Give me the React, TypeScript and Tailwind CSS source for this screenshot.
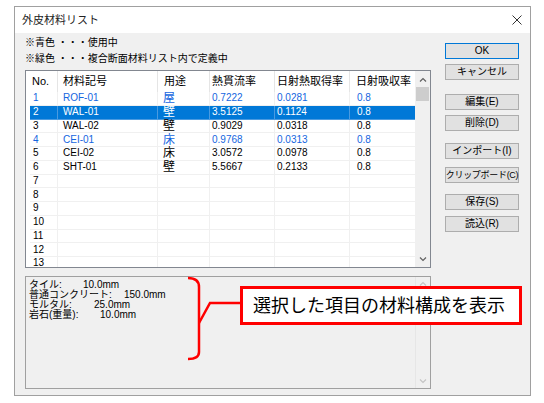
import React from 'react';

type Row = {
  no: number;
  code?: string;
  use?: string;
  u?: string;
  shgc?: string;
  abs?: string;
  color?: 'blue' | 'black';
};

const rows: Row[] = [
  { no: 1, code: 'ROF-01', use: '屋', u: '0.7222', shgc: '0.0281', abs: '0.8', color: 'blue' },
  { no: 2, code: 'WAL-01', use: '壁', u: '3.5125', shgc: '0.1124', abs: '0.8' },
  { no: 3, code: 'WAL-02', use: '壁', u: '0.9029', shgc: '0.0318', abs: '0.8' },
  { no: 4, code: 'CEI-01', use: '床', u: '0.9768', shgc: '0.0313', abs: '0.8', color: 'blue' },
  { no: 5, code: 'CEI-02', use: '床', u: '3.0572', shgc: '0.0978', abs: '0.8' },
  { no: 6, code: 'SHT-01', use: '壁', u: '5.5667', shgc: '0.2133', abs: '0.8' },
  { no: 7 },
  { no: 8 },
  { no: 9 },
  { no: 10 },
  { no: 11 },
  { no: 12 },
  { no: 13 },
];

const SELECTED = 2;

function Chevron({ up, faint }: { up?: boolean; faint?: boolean }) {
  return (
    <svg width="8" height="5" viewBox="0 0 8 5" className="block">
      <path
        d={up ? 'M1 4.5 L4 1.5 L7 4.5' : 'M1 0.5 L4 3.5 L7 0.5'}
        fill="none"
        stroke={faint ? '#c4c4c4' : '#606060'}
        strokeWidth="1.2"
      />
    </svg>
  );
}

function Btn({ label, def, className = '' }: { label: string; def?: boolean; className?: string }) {
  return (
    <div
      className={`h-[16px] w-[74px] flex items-center justify-center bg-[#e1e1e1] leading-none whitespace-nowrap text-black border ${
        def ? 'border-[#0078d7]' : 'border-[#adadad]'
      } ${className}`}
    >
      {label}
    </div>
  );
}

export default function App() {
  return (
    <div className="relative w-[544px] h-[403px] bg-white overflow-hidden pt-[6px] pl-[14px] font-['Liberation_Sans','Noto_Sans_CJK_JP',sans-serif] text-black">
      {/* Dialog */}
      <div className="w-[517px] h-[390px] border border-[#a0a0a0] bg-[#f0f0f0] flex flex-col">
        {/* Title bar */}
        <div className="h-[26px] bg-white flex items-center justify-between pl-[7px] pr-[8px] shrink-0">
          <span className="text-[11px] text-[#222]">外皮材料リスト</span>
          <svg width="10" height="10" viewBox="0 0 10 10">
            <path d="M0.5 0.5 L9.5 9.5 M9.5 0.5 L0.5 9.5" stroke="#333" strokeWidth="1" />
          </svg>
        </div>

        {/* Body */}
        <div className="flex pl-[10px]">
          {/* Left column */}
          <div className="w-[406px] pt-[2px]">
            <div className="text-[10px] leading-[16px]">※青色 ・・・使用中</div>
            <div className="text-[10px] leading-[16px]">※緑色 ・・・複合断面材料リスト内で定義中</div>

            {/* List */}
            <div className="mt-[3px] h-[198px] border border-[#828790] bg-white flex overflow-hidden">
              <div className="w-[389px] pl-[4px] flex flex-col">
                {/* Header */}
                <div className="h-[21px] flex items-center text-[11px] shrink-0">
                  <div className="w-[28px] h-full flex items-center pl-[2px] border-r border-[#e5e5e5]">No.</div>
                  <div className="w-[100px] h-full flex items-center pl-[5px] border-r border-[#e5e5e5]">材料記号</div>
                  <div className="w-[52px] h-full flex items-center pl-[6px] border-r border-[#e5e5e5]">用途</div>
                  <div className="w-[65px] h-full flex items-center pl-[2px] border-r border-[#e5e5e5]">熱貫流率</div>
                  <div className="w-[75px] h-full flex items-center pl-[2px] border-r border-[#e5e5e5]">日射熱取得率</div>
                  <div className="w-[65px] h-full flex items-center pl-[6px]">日射吸収率</div>
                </div>
                {/* Rows */}
                {rows.map((r) => {
                  const sel = r.no === SELECTED;
                  const color = sel ? 'text-white' : r.color === 'blue' ? 'text-[#1466e0]' : 'text-black';
                  const line = sel ? 'border-[#4a9ae0]' : 'border-[#f0f0f0]';
                  return (
                    <div
                      key={r.no}
                      className={`h-[13.75px] shrink-0 flex items-center leading-none border-b ${line} ${sel ? 'bg-[#0078d7]' : ''} ${color}`}
                    >
                      <div className={`w-[28px] h-full flex items-center pl-[3px] text-[10px] border-r ${line}`}>{r.no}</div>
                      <div className={`w-[100px] h-full flex items-center pl-[5px] text-[10px] border-r ${line}`}>{r.code}</div>
                      <div className={`w-[52px] h-full flex items-center pl-[5px] text-[12px] border-r ${line}`}>{r.use}</div>
                      <div className={`w-[65px] h-full flex items-center pl-[2px] text-[10px] border-r ${line}`}>{r.u}</div>
                      <div className={`w-[75px] h-full flex items-center pl-[2px] text-[10px] border-r ${line}`}>{r.shgc}</div>
                      <div className="w-[65px] h-full flex items-center pl-[7px] text-[10px]">{r.abs}</div>
                    </div>
                  );
                })}
              </div>
              {/* Scrollbar */}
              <div className="w-[15px] bg-[#f0f0f0] flex flex-col items-center">
                <div className="h-[15px] flex items-center justify-center mt-[1px]">
                  <Chevron up />
                </div>
                <div className="w-[13px] h-[14px] bg-[#cdcdcd]" />
                <div className="flex-1" />
                <div className="h-[15px] flex items-center justify-center">
                  <Chevron />
                </div>
              </div>
            </div>

            {/* Composition panel */}
            <div className="mt-[8px] h-[113px] border border-[#a0a0a0] bg-[#f0f0f0] flex">
              <div className="flex-1 pl-[3px] pt-[3px] text-[10px] leading-[10px] text-black">
                <div className="flex">
                  <span className="w-[54px]">タイル:</span>
                  <span>10.0mm</span>
                </div>
                <div className="flex">
                  <span className="w-[95px]">普通コンクリート:</span>
                  <span>150.0mm</span>
                </div>
                <div className="flex">
                  <span className="w-[65px]">モルタル:</span>
                  <span>25.0mm</span>
                </div>
                <div className="flex">
                  <span className="w-[71px]">岩石(重量):</span>
                  <span>10.0mm</span>
                </div>
              </div>
              <div className="w-[15px] border-l border-[#e6e6e6] flex flex-col items-center justify-between py-[4px]">
                <Chevron up faint />
                <Chevron faint />
              </div>
            </div>
          </div>

          {/* Buttons */}
          <div className="ml-[14px] pt-[10px] flex flex-col">
            <Btn label="OK" def className="text-[10px]" />
            <Btn label="キャンセル" className="mt-[5px] text-[10px]" />
            <Btn label="編集(E)" className="mt-[14px] text-[10px]" />
            <Btn label="削除(D)" className="mt-[5px] text-[10px]" />
            <Btn label="インポート(I)" className="mt-[12px] text-[10px]" />
            <Btn label="クリップボード(C)" className="mt-[8px] text-[9px] tracking-[-0.3px]" />
            <Btn label="保存(S)" className="mt-[11px] text-[10px]" />
            <Btn label="読込(R)" className="mt-[6px] text-[10px]" />
          </div>
        </div>
      </div>

      {/* Annotation: bracket */}
      <svg className="absolute left-[180px] top-[270px]" width="70" height="100" viewBox="0 0 70 100">
        <path
          d="M8 8 Q19 8 19 17 L19 82 Q19 89 8 89"
          fill="none"
          stroke="#ff0000"
          strokeWidth="2.5"
        />
        <path d="M19 53 L30 33 L62 33" fill="none" stroke="#ff0000" strokeWidth="2.5" />
      </svg>

      {/* Annotation: callout box */}
      <div className="absolute left-[240px] top-[286px] w-[282px] h-[39px] border-[3px] border-[#ff0000] bg-white flex items-center pl-[10px] text-[18px] leading-none text-black">
        選択した項目の材料構成を表示
      </div>
    </div>
  );
}
